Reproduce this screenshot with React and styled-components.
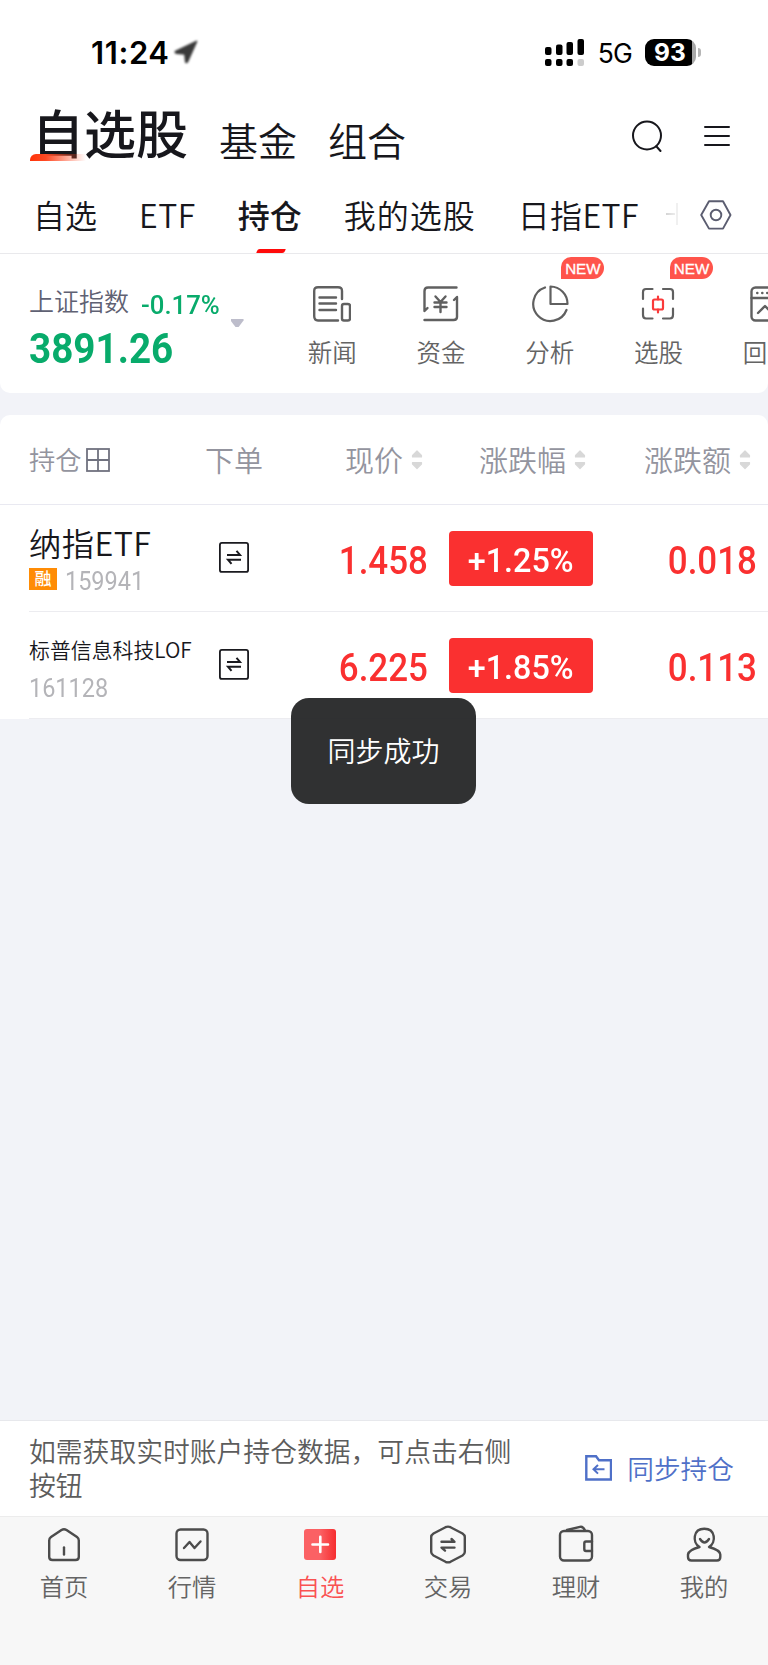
import React from 'react';
import styled, { createGlobalStyle } from 'styled-components';

const GlobalStyle = createGlobalStyle`
    * {
        box-sizing: border-box;
    }

    body {
        margin: 0;
        background-color: #f2f3f8;
        font-family: "Noto Sans CJK SC", "Noto Sans", sans-serif;
        font-weight: 350;
        color: #17171c;
    }
`;

const Screen = styled.div`
    position: relative;
    display: flex;
    flex-direction: column;
    width: 768px;
    height: 1665px;
    overflow: hidden;
    background-color: #f2f3f8;

    svg {
        display: block;
        flex: none;
    }
`;

const Header = styled.header`
    background-color: #fff;
`;

/* ---------- status bar ---------- */

const StatusBar = styled.div`
    display: flex;
    align-items: center;
    height: 104px;
    padding: 0 67px 0 91px;
    font-family: Inter, "Liberation Sans", sans-serif;
    color: #000;
`;

const Clock = styled.span`
    font-size: 31px;
    font-weight: 600;
    line-height: 36px;
    letter-spacing: 0.6px;
    margin: 1px 3px 0 0;
`;

const Network = styled.span`
    font-size: 26.5px;
    font-weight: 400;
    line-height: 32px;
    letter-spacing: -0.8px;
    margin: 2px 13px 0 13px;
`;

const Signal = styled.svg`
    margin-left: auto;
`;

const Battery = styled.div`
    display: flex;
    align-items: center;
`;

const BatteryBody = styled.span`
    width: 51px;
    height: 27px;
    padding-left: 9px;
    border-radius: 9px;
    background: linear-gradient(to right, #000 47px, #a8a8a8 47px);
    color: #fff;
    font-size: 24.5px;
    font-weight: 700;
    line-height: 27px;
`;

const BatteryTip = styled.span`
    width: 3px;
    height: 9px;
    margin-left: 2px;
    border-radius: 0 3px 3px 0;
    background-color: #b5b5b5;
`;

/* ---------- titles ---------- */

const TitleBar = styled.div`
    display: flex;
    align-items: flex-start;
    height: 64px;
    padding: 0 38px 0 32px;
`;

const MainTitle = styled.h1`
    position: relative;
    margin: 0 31px 0 0;
    font-size: 52px;
    font-weight: 500;
    line-height: 55px;

    &::after {
        content: '';
        position: absolute;
        left: -2px;
        top: 50px;
        width: 56px;
        height: 7px;
        border-radius: 6px 0 0 0;
        background: linear-gradient(to right, #ff3208, #ff4a24 28%, rgba(255, 90, 60, 0));
    }
`;

const SubTitle = styled.span`
    margin: 15px 31px 0 0;
    font-size: 39px;
    line-height: 40px;
`;

const TitleActions = styled.div`
    display: flex;
    align-items: center;
    gap: 40px;
    height: 64px;
    margin-left: auto;
`;

/* ---------- tabs ---------- */

const Tabs = styled.nav`
    display: flex;
    align-items: center;
    gap: 42px;
    height: 86px;
    padding: 6px 34px 0 33px;
    border-bottom: 1px solid #e9e9ec;
`;

const Tab = styled.span`
    position: relative;
    flex: none;
    font-size: 32px;
    font-weight: ${({ $active }) => ($active ? 500 : 350)};
    line-height: 40px;
    letter-spacing: ${({ $spacing }) => $spacing || 0}px;
    white-space: nowrap;

    &::after {
        content: '';
        display: ${({ $active }) => ($active ? 'block' : 'none')};
        position: absolute;
        left: 19px;
        bottom: -19px;
        width: 28px;
        height: 4px;
        border-radius: 2px 0 2px 0;
        background-color: #ff0a0a;
        transform: skewX(-20deg);
    }
`;

const NextTab = styled.span`
    flex: none;
    width: 14px;
    height: 22px;
    margin-left: -15px;
    background:
        linear-gradient(to right, #d4d4d4, #ececec) 0 10px / 9px 2px no-repeat,
        linear-gradient(#f0f0f0, #f0f0f0) 10px 0 / 2px 22px no-repeat;
`;

const TabSettings = styled.span`
    flex: none;
    margin-left: -22px;
    padding-top: 2px;
    color: #5b5d70;
`;

/* ---------- index + shortcuts ---------- */

const IndexPanel = styled.section`
    display: flex;
    height: 139px;
    overflow: hidden;
    border-radius: 0 0 10px 10px;
    background-color: #fff;
`;

const PanelGap = styled.div`
    height: 22px;
    flex: none;
`;

const IndexInfo = styled.div`
    width: 278px;
    flex: none;
    padding: 32px 0 0 29px;
`;

const IndexLine = styled.div`
    display: flex;
    height: 40px;
    align-items: flex-start;
`;

const IndexName = styled.span`
    width: 112px;
    font-size: 25px;
    line-height: 28px;
    color: #5f6173;
`;

/* narrow figures, squeezed towards the side they are aligned to */
const Digits = styled.span`
    display: inline-block;
    font-family: Roboto, "Liberation Sans", sans-serif;
    font-size: ${({ $size }) => $size}px;
    font-weight: ${({ $weight }) => $weight || 400};
    line-height: 1.1;
    color: ${({ $color }) => $color};
    white-space: nowrap;
    transform: scaleX(${({ $squeeze }) => $squeeze || 0.92});
    transform-origin: ${({ $align }) => $align || 'left'} center;
`;

const IndexChange = styled.div`
    padding-top: 5px;
`;

const Caret = styled.span`
    width: 13px;
    height: 8px;
    margin: 33px 0 0 10px;
    background-color: #bdbdcb;
    clip-path: polygon(0 0, 100% 0, 100% 20%, 62% 100%, 38% 100%, 0 20%);
`;

const Shortcut = styled.div`
    position: relative;
    display: flex;
    flex-direction: column;
    align-items: ${({ $partial }) => ($partial ? 'flex-start' : 'center')};
    flex: none;
    width: ${({ $partial }) => ($partial ? 55 : 108.7)}px;
    padding: 31px 0 0 ${({ $partial }) => ($partial ? 30 : 0)}px;
    color: #606060;
`;

const ShortcutIconBox = styled.div`
    display: flex;
    align-items: center;
    height: 38px;
    padding-left: ${({ $partial }) => ($partial ? 7 : 0)}px;
`;

const ShortcutLabel = styled.span`
    margin-top: 12px;
    font-size: 24.5px;
    line-height: 34px;
    color: #646464;
`;

const NewBadge = styled.span`
    position: absolute;
    left: 66px;
    top: 3px;
    width: 43px;
    height: 22px;
    border-radius: 10px 11px 11px 0;
    background-color: #ff544b;
    color: #fff;
    font-family: "Liberation Sans", sans-serif;
    font-size: 15.2px;
    font-weight: 400;
    -webkit-text-stroke: 0.3px #fff;
    line-height: 24px;
    text-align: center;
`;

/* ---------- holdings table ---------- */

const Holdings = styled.section`
    display: flex;
    flex-direction: column;
    border-radius: 10px 10px 0 0;
    background-color: #fff;
`;

const columns = '190px 112px 147px 174px 145px';

const HeadRow = styled.div`
    display: grid;
    grid-template-columns: ${columns};
    align-items: center;
    height: 90px;
    padding-top: 1px;
    border-bottom: 1px solid #e9e9f1;
    color: #93949e;
    line-height: 34px;
`;

const HeadCell = styled.div`
    display: flex;
    align-items: center;
    justify-content: ${({ $first }) => ($first ? 'flex-start' : 'flex-end')};
    gap: ${({ $first }) => ($first ? 4 : 8)}px;
    padding-left: ${({ $first }) => ($first ? 29 : 0)}px;
    padding-right: ${({ $right }) => $right || 0}px;
    font-size: ${({ $first }) => ($first ? 26.3 : 29)}px;
    white-space: nowrap;
`;

const HeadText = styled.span`
    margin-top: -2px;
`;

const Row = styled.div`
    display: grid;
    grid-template-columns: ${columns};
    height: 107px;
    background: linear-gradient(#ececf0, #ececf0) 29px 106px / 739px 1px no-repeat;
`;

const NameCell = styled.div`
    display: flex;
    flex-direction: column;
    padding: 16px 0 0 29px;
    white-space: nowrap;
`;

const StockName = styled.span`
    height: 44px;
    font-size: ${({ $small }) => ($small ? 20.9 : 32.3)}px;
    line-height: 42px;
    letter-spacing: ${({ $small }) => ($small ? 0 : 0.4)}px;
`;

const CodeLine = styled.div`
    display: flex;
    align-items: center;
    gap: 8px;
    height: 28px;
    margin-top: 2px;
`;

const MarginTag = styled.span`
    width: 28px;
    height: 22px;
    margin-top: -4px;
    background-color: #ff8c05;
    color: #fff;
    font-size: 17px;
    font-weight: 500;
    line-height: 20px;
    text-align: center;
`;

const TradeCell = styled.div`
    padding: 37px 0 0 29px;
`;

const PriceCell = styled.div`
    padding: 36px 21px 0 0;
    text-align: right;
`;

const DiffCell = styled.div`
    padding: 36px 11px 0 0;
    text-align: right;
`;

const ChangePill = styled.div`
    display: flex;
    align-items: center;
    justify-content: center;
    width: 144px;
    height: 55px;
    margin-top: 26px;
    padding-top: 5px;
    border-radius: 4px;
    background-color: #fa3030;
`;

const Toast = styled.div`
    position: absolute;
    left: 291px;
    top: 698px;
    width: 185px;
    height: 106px;
    border-radius: 18px;
    background-color: rgba(35, 36, 37, 0.94);
    color: #fff;
    font-size: 28px;
    line-height: 105px;
    text-align: center;
`;

/* ---------- bottom ---------- */

const SyncBar = styled.div`
    display: flex;
    height: 96px;
    margin-top: auto;
    padding: 13px 34px 0 29px;
    border-top: 1px solid #e7e8ec;
    background-color: #fff;
`;

const SyncHint = styled.p`
    width: 490px;
    margin: 0;
    font-size: 26.8px;
    line-height: 34px;
    color: #5c5c5c;
`;

const SyncButton = styled.div`
    display: flex;
    align-items: center;
    gap: 15px;
    height: 68px;
    margin-left: auto;
    font-size: 26.7px;
    line-height: 34px;
    color: #4f70c8;
`;

const BottomNav = styled.nav`
    display: grid;
    grid-template-columns: repeat(6, 1fr);
    height: 149px;
    border-top: 1px solid #ececec;
    background-color: #f7f7f7;
`;

const NavItem = styled.div`
    display: flex;
    flex-direction: column;
    align-items: center;
    padding-top: 8px;
    font-size: 24.3px;
    line-height: 34px;
    color: ${({ $active }) => ($active ? '#fa5252' : '#646464')};

    svg {
        margin-bottom: 4px;
        color: #4c4c4c;
    }
`;

/* ---------- icons ---------- */

const Icon = ({ w, h, sw = 2.4, children }) => (
    <svg
        width={w}
        height={h}
        viewBox={`0 0 ${w} ${h}`}
        fill="none"
        stroke="currentColor"
        strokeWidth={sw}
        strokeLinecap="round"
        strokeLinejoin="round"
    >
        {children}
    </svg>
);

const LocationIcon = () => (
    <svg width="26" height="26" viewBox="0 0 26 26" style={{ filter: 'blur(0.8px)' }}>
        <path
            d="M23.5 2.5 L2.5 12.5 Q2 13.8 3.5 14 L12 14.8 L12.8 23 Q13.5 24 14.5 22.5 Z"
            fill="#3a3a3a"
            stroke="#3a3a3a"
            strokeWidth="1.8"
            strokeLinejoin="round"
        />
    </svg>
);

const SignalIcon = () => (
    <Signal width="40" height="27" viewBox="0 0 40 27">
        <rect x="0" y="8" width="6.5" height="8" rx="2" />
        <rect x="11" y="5.5" width="6.5" height="10.5" rx="2" />
        <rect x="21.5" y="3" width="6.5" height="13" rx="2" />
        <rect x="32.5" y="0" width="6.5" height="16" rx="2" />
        <rect x="0" y="20" width="6.5" height="7" rx="2" />
        <rect x="11" y="20" width="6.5" height="7" rx="2" />
        <rect x="21.5" y="20" width="6.5" height="7" rx="2" />
        <rect x="32.5" y="20" width="6.5" height="7" rx="2" fill="#ccc" />
    </Signal>
);

const SearchIcon = () => (
    <Icon w={31} h={32} sw={2}>
        <circle cx="15" cy="15.5" r="14" />
        <path d="M24.5 26.5 L28.5 31" />
    </Icon>
);

const MenuIcon = () => (
    <Icon w={27} h={22} sw={2}>
        <path d="M2 2 H26 M2 11 H26 M2 20 H26" />
    </Icon>
);

const HexIcon = () => (
    <Icon w={32} h={30} sw={1.9}>
        <path d="M9 1.2 H23 L30.5 15 L23 28.6 H9 L1.2 15 Z" />
        <circle cx="16" cy="15" r="5.3" />
    </Icon>
);

const NewsIcon = () => (
    <Icon w={38} h={36}>
        <path d="M29 13 V5 Q29 1.2 25 1.2 H5 Q1.2 1.2 1.2 5 V30 Q1.2 34.5 5 34.5 H25" />
        <path d="M6.5 11.5 H23 M6.5 17.5 H23 M6.5 24 H23" />
        <rect x="29" y="18" width="8" height="16.5" rx="2" />
    </Icon>
);

const FundIcon = () => (
    <Icon w={36} h={36}>
        <path d="M33.5 1.5 H5 Q1.5 1.5 1.5 5 V25 L4.5 22" />
        <path d="M1.5 34 H30.5 Q34 34 34 31 V11 L31 14" />
        <path d="M12.5 10.5 L17.5 16 L22.5 10.5 M17.5 16 V26 M11.5 16.5 H23.5 M11.5 21 H23.5" />
    </Icon>
);

const PieIcon = () => (
    <Icon w={38} h={38} sw={2.2}>
        <path d="M14 2.5 A17.2 17.2 0 1 0 35.5 25" />
        <path d="M19.5 1.5 V19 H36.5 A17.2 17.2 0 0 0 19.5 1.5 Z" />
    </Icon>
);

const PickIcon = () => (
    <Icon w={34} h={36} sw={2.2}>
        <path d="M11.5 3 H5 Q2 3 2 6 V13 M22 3 H29 Q32 3 32 6 V13 M2 22.5 V29 Q2 32.5 5 32.5 H11.5 M22 32.5 H29 Q32 32.5 32 29 V22.5" />
        <rect x="12" y="13.5" width="10" height="10" rx="1.5" stroke="#fa3a3a" />
        <path d="M17 10.5 V13.5 M17 23.5 V26.5" stroke="#fa3a3a" />
    </Icon>
);

const ReplayIcon = () => (
    <Icon w={36} h={36}>
        <rect x="1.5" y="1.5" width="33" height="33" rx="4" />
        <path d="M1.5 12 H34.5" />
        <path d="M7.2 7 H7.4 M12.2 7 H12.4 M17.2 7 H17.4" />
        <path d="M8 27 L15 20 L22 27 L28 20" />
    </Icon>
);

const GridIcon = () => (
    <svg width="24" height="24" viewBox="0 0 24 24" fill="none" stroke="#70727f" strokeWidth="1.8">
        <rect x="1" y="1" width="22" height="22" />
        <path d="M12 1 V23 M1 12 H23" />
    </svg>
);

const SortIcon = () => (
    <svg width="12" height="20" viewBox="0 0 12 20" fill="#d8d8d8">
        <path
            d="M6 1 L10.5 5.5 V7 H1.5 V5.5 Z M1.5 12.5 H10.5 V14 L6 18.5 L1.5 14 Z"
            stroke="#d8d8d8"
            strokeWidth="1.2"
            strokeLinejoin="round"
        />
    </svg>
);

const TradeIcon = () => (
    <svg width="30" height="31" viewBox="0 0 30 31" fill="none" stroke="#1a1a1f" strokeWidth="1.8">
        <rect x="0.9" y="0.9" width="28.2" height="29" rx="2" />
        <path d="M8 12.9 H21 L17.5 8.8 M22 17.7 H9 L12.5 21.8" strokeWidth="2" />
    </svg>
);

const FolderIcon = () => (
    <svg width="28" height="26" viewBox="0 0 28 26" fill="none" stroke="currentColor" strokeWidth="2.4">
        <path d="M2.3 1.3 H12 L15 5.3 H27 V24.5 H2.3 Z" />
        <path d="M9.5 14.3 H20.5 M14 10 L9.5 14.3 L14 18.6" strokeWidth="2" />
    </svg>
);

const HomeIcon = () => (
    <Icon w={40} h={40}>
        <path d="M17.5 5 Q20 3.5 22.5 5 L33 12 Q34.8 13.3 34.8 15.5 V32 Q34.8 35 31.5 35 H8.5 Q5.2 35 5.2 32 V15.5 Q5.2 13.3 7 12 Z" />
        <path d="M20 22.5 V29.5" />
    </Icon>
);

const MarketIcon = () => (
    <Icon w={40} h={40}>
        <rect x="4.5" y="4.5" width="31" height="30.5" rx="4" />
        <path d="M12 23 L17.5 17 L22.5 23 L28.5 16.5" />
    </Icon>
);

const WatchIcon = () => (
    <svg width="40" height="40" viewBox="0 0 40 40">
        <defs>
            <linearGradient id="watch" x1="0" x2="1">
                <stop offset="0.5" stopColor="#fb6164" />
                <stop offset="1" stopColor="#f62d2f" />
            </linearGradient>
        </defs>
        <rect x="4" y="4" width="32" height="31" rx="3" fill="url(#watch)" />
        <path d="M12.5 19.5 H28 M20.3 11.7 V27" stroke="#fff" strokeWidth="2.6" strokeLinecap="round" />
    </svg>
);

const ExchangeIcon = () => (
    <Icon w={40} h={40}>
        <path d="M17.5 2.2 Q20 1 22.5 2.2 L34.5 8.5 Q36.8 10 36.8 12 V27 Q36.8 29 34.5 30.5 L22.5 36.8 Q20 38 17.5 36.8 L5.5 30.5 Q3.2 29 3.2 27 V12 Q3.2 10 5.5 8.5 Z" />
        <path d="M13.5 16.8 H26.5 L23.5 14 M26.5 22.6 H13.5 L17 25.6" />
    </Icon>
);

const WalletIcon = () => (
    <Icon w={40} h={40}>
        <rect x="4" y="6" width="32" height="29.5" rx="4" />
        <path d="M36 16.5 H30 Q28.3 16.5 28.3 18.5 V24 Q28.3 26 30 26 H36" />
        <path d="M11 5 L24 1.8 Q27 1 29 5.5" />
    </Icon>
);

const ProfileIcon = () => (
    <Icon w={40} h={40}>
        <path d="M15.5 22 C8 17.5 9 3.8 20.3 3.8 C31.6 3.8 32.5 17.5 25 22 Q36 25 36.3 29.5 V32 Q36.3 35.5 33 35.5 H7.5 Q4 35.5 4 32 V29.5 Q4.5 25 15.5 22 Z" />
        <path d="M16 14 Q20.5 21 25 14" />
    </Icon>
);

/* ---------- data ---------- */

const shortcuts = [
    { label: '新闻', icon: NewsIcon },
    { label: '资金', icon: FundIcon },
    { label: '分析', icon: PieIcon, isNew: true },
    { label: '选股', icon: PickIcon, isNew: true },
    { label: '回', icon: ReplayIcon, partial: true },
];

const holdings = [
    { name: '纳指ETF', code: '159941', margin: true, price: '1.458', change: '+1.25%', diff: '0.018' },
    { name: '标普信息科技LOF', code: '161128', margin: false, price: '6.225', change: '+1.85%', diff: '0.113' },
];

const navItems = [
    { label: '首页', icon: HomeIcon },
    { label: '行情', icon: MarketIcon },
    { label: '自选', icon: WatchIcon, active: true },
    { label: '交易', icon: ExchangeIcon },
    { label: '理财', icon: WalletIcon },
    { label: '我的', icon: ProfileIcon },
];

const HoldingRow = ({ item }) => (
    <Row>
        <NameCell>
            <StockName $small={item.name.length > 6}>{item.name}</StockName>
            <CodeLine>
                {item.margin && <MarginTag>融</MarginTag>}
                <Digits $size={25.5} $squeeze={0.92} $color="#b4b4b8">{item.code}</Digits>
            </CodeLine>
        </NameCell>
        <TradeCell>
            <TradeIcon />
        </TradeCell>
        <PriceCell>
            <Digits $size={38} $weight={500} $align="right" $color="#fa3030">{item.price}</Digits>
        </PriceCell>
        <ChangePill>
            <Digits $size={34} $weight={500} $squeeze={0.95} $align="center" $color="#fff">{item.change}</Digits>
        </ChangePill>
        <DiffCell>
            <Digits $size={38} $weight={500} $align="right" $color="#fa3030">{item.diff}</Digits>
        </DiffCell>
    </Row>
);

const App = () => {
    return (
        <Screen>
            <GlobalStyle />
            <Header>
                <StatusBar>
                    <Clock>11:24</Clock>
                    <LocationIcon />
                    <SignalIcon />
                    <Network>5G</Network>
                    <Battery>
                        <BatteryBody>93</BatteryBody>
                        <BatteryTip />
                    </Battery>
                </StatusBar>
                <TitleBar>
                    <MainTitle>自选股</MainTitle>
                    <SubTitle>基金</SubTitle>
                    <SubTitle>组合</SubTitle>
                    <TitleActions>
                        <SearchIcon />
                        <MenuIcon />
                    </TitleActions>
                </TitleBar>
                <Tabs>
                    <Tab>自选</Tab>
                    <Tab $spacing={0.5}>ETF</Tab>
                    <Tab $active>持仓</Tab>
                    <Tab $spacing={1}>我的选股</Tab>
                    <Tab $spacing={0.4}>日指ETF</Tab>
                    <NextTab />
                    <TabSettings>
                        <HexIcon />
                    </TabSettings>
                </Tabs>
            </Header>

            <IndexPanel>
                <IndexInfo>
                    <IndexLine>
                        <IndexName>上证指数</IndexName>
                        <IndexChange>
                            <Digits $size={26} $weight={500} $squeeze={0.99} $color="#08ab6b">-0.17%</Digits>
                        </IndexChange>
                        <Caret />
                    </IndexLine>
                    <Digits $size={42} $weight={700} $color="#08ab6b">3891.26</Digits>
                </IndexInfo>
                {shortcuts.map(({ label, icon: ShortcutIcon, isNew, partial }) => (
                    <Shortcut key={label} $partial={partial}>
                        <ShortcutIconBox $partial={partial}>
                            <ShortcutIcon />
                        </ShortcutIconBox>
                        <ShortcutLabel>{label}</ShortcutLabel>
                        {isNew && <NewBadge>NEW</NewBadge>}
                    </Shortcut>
                ))}
            </IndexPanel>
            <PanelGap />

            <Holdings>
                <HeadRow>
                    <HeadCell $first>
                        <HeadText>持仓</HeadText>
                        <GridIcon />
                    </HeadCell>
                    <HeadCell $right={39}>
                        <HeadText>下单</HeadText>
                    </HeadCell>
                    <HeadCell $right={26}>
                        <HeadText>现价</HeadText>
                        <SortIcon />
                    </HeadCell>
                    <HeadCell $right={37}>
                        <HeadText>涨跌幅</HeadText>
                        <SortIcon />
                    </HeadCell>
                    <HeadCell $right={17}>
                        <HeadText>涨跌额</HeadText>
                        <SortIcon />
                    </HeadCell>
                </HeadRow>
                {holdings.map((item) => (
                    <HoldingRow key={item.code} item={item} />
                ))}
            </Holdings>

            <SyncBar>
                <SyncHint>如需获取实时账户持仓数据，可点击右侧按钮</SyncHint>
                <SyncButton>
                    <FolderIcon />
                    同步持仓
                </SyncButton>
            </SyncBar>
            <BottomNav>
                {navItems.map(({ label, icon: NavIcon, active }) => (
                    <NavItem key={label} $active={active}>
                        <NavIcon />
                        {label}
                    </NavItem>
                ))}
            </BottomNav>

            <Toast>同步成功</Toast>
        </Screen>
    );
};

export default App;
